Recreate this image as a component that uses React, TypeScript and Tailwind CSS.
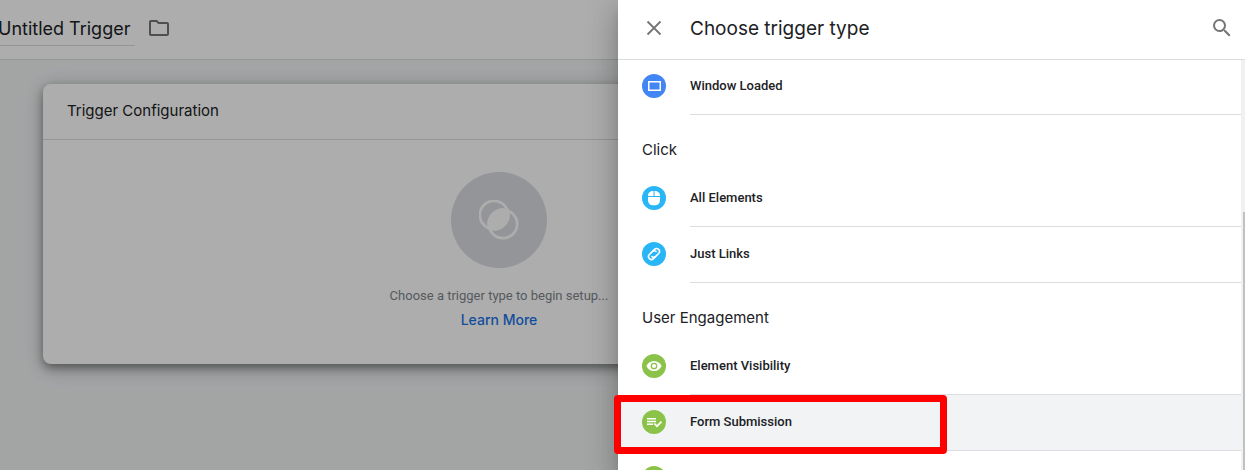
import React from 'react';
import { MdOutlineFolder, MdSearch } from 'react-icons/md';

type IconName = 'window' | 'mouse' | 'link' | 'eye' | 'form' | 'scroll';

interface TriggerType {
  label: string;
  icon: IconName;
  selected?: boolean;
}

interface TriggerGroup {
  title?: string;
  items: TriggerType[];
}

const groups: TriggerGroup[] = [
  { items: [{ label: 'Window Loaded', icon: 'window' }] },
  {
    title: 'Click',
    items: [
      { label: 'All Elements', icon: 'mouse' },
      { label: 'Just Links', icon: 'link' },
    ],
  },
  {
    title: 'User Engagement',
    items: [
      { label: 'Element Visibility', icon: 'eye' },
      { label: 'Form Submission', icon: 'form', selected: true },
      { label: '', icon: 'scroll' },
    ],
  },
];

const iconColors: Record<IconName, string> = {
  window: 'text-[#4285f4]',
  mouse: 'text-[#29b6f6]',
  link: 'text-[#29b6f6]',
  eye: 'text-[#8bc34a]',
  form: 'text-[#8bc34a]',
  scroll: 'text-[#8bc34a]',
};

const TriggerIcon: React.FC<{ name: IconName }> = ({ name }) => (
  <svg viewBox="0 0 24 24" className={`mb-0.5 size-6 shrink-0 ${iconColors[name]}`} aria-hidden="true">
    <circle cx="12" cy="12" r="12" fill="currentColor" />
    {name === 'window' && <path d="M6 7h13v10H6zM7.500 8.500v7h10v-7z" fill="#fff" fillRule="evenodd" />}
    {name === 'mouse' && (
      <>
        <path d="M11.500 5v5H6V9.500C6 6.900 8.200 5 11.500 5zM12.500 5C15.800 5 18 6.900 18 9.500v.5h-5.500z" fill="#fff" />
        <path d="M6 11h12v3.500a4.800 4.800 0 0 1-4.800 4.800h-2.400A4.800 4.800 0 0 1 6 14.500z" fill="#fff" />
      </>
    )}
    {name === 'link' && (
      <g transform="rotate(-45 12 12)" fill="none" stroke="#fff" strokeWidth="1.600" strokeLinecap="round">
        <path d="M11.200 14.900H8.400a2.900 2.900 0 0 1 0-5.800h4a2.900 2.900 0 0 1 2.800 2.500" />
        <path d="M12.800 9.100h2.800a2.900 2.900 0 0 1 0 5.800h-4a2.900 2.900 0 0 1-2.800-2.500" />
      </g>
    )}
    {name === 'eye' && (
      <>
        <path d="M4.400 12C5.600 9 8.500 6.900 12 6.900s6.400 2.100 7.600 5.100c-1.200 3-4.100 5.100-7.600 5.100S5.600 15 4.400 12z" fill="#fff" />
        <circle cx="12" cy="12" r="2.700" fill="#fff" stroke="currentColor" strokeWidth="1.300" />
      </>
    )}
    {name === 'form' && (
      <>
        <path d="M5 8h9v1.400H5zM5 10.800h9v1.400H5zM5 13.600h6V15H5z" fill="#fff" />
        <path d="M12.300 13.500l2.700 2.700 4.500-4.500" fill="none" stroke="#fff" strokeWidth="1.700" />
      </>
    )}
  </svg>
);

const TriggerRow: React.FC<{ item: TriggerType }> = ({ item }) => (
  <li className="relative">
    <button
      type="button"
      className={`flex h-14 w-full items-center gap-6 pl-6 text-left ${item.selected ? 'bg-[#f1f3f4]' : 'bg-white'}`}
    >
      <TriggerIcon name={item.icon} />
      <span className="flex h-full flex-1 items-center border-b border-[#dadce0] pb-0.5 text-[13px] font-medium text-[#202124]">
        {item.label}
      </span>
    </button>
    {item.selected && (
      <div className="pointer-events-none absolute top-0 -left-1 z-10 h-[59px] w-[333px] rounded-[4px] border-[7px] border-[#ff0000]" />
    )}
  </li>
);

const TriggerDrawer: React.FC = () => (
  <aside
    role="dialog"
    aria-label="Choose trigger type"
    className="absolute inset-y-0 right-0 flex w-[627px] max-w-full flex-col bg-white shadow-[0_8px_10px_-5px_rgba(0,0,0,0.2),0_16px_24px_2px_rgba(0,0,0,0.14),0_6px_30px_5px_rgba(0,0,0,0.12)]"
  >
    <header className="relative z-10 flex h-[60px] shrink-0 items-center border-b border-[#dadce0] bg-white pr-[11px] pb-1 pl-6">
      <button type="button" aria-label="Close" className="mr-6 size-6 text-[#757575]">
        <svg viewBox="0 0 24 24" className="size-6" fill="none" stroke="currentColor" strokeWidth="1.800">
          <path d="M5.500 5.500l13 13M18.500 5.500l-13 13" />
        </svg>
      </button>
      <h2 className="flex-1 pt-1 font-[Inter,sans-serif] text-[19px] text-[#202124]">Choose trigger type</h2>
      <button type="button" aria-label="Search" className="text-[#757575]">
        <MdSearch className="size-6" />
      </button>
    </header>
    <div className="-mt-px flex min-h-0 flex-1">
      <div className="flex-1">
        {groups.map((group, index) => (
          <section key={index}>
            {group.title && (
              <h3 className="flex h-14 items-center px-6 pt-3.5 font-[Inter,sans-serif] text-[15px] text-[#202124]">
                {group.title}
              </h3>
            )}
            <ul>
              {group.items.map(item => (
                <TriggerRow key={item.icon} item={item} />
              ))}
            </ul>
          </section>
        ))}
      </div>
      <div className="flex w-1 flex-col items-end bg-[#f1f1f1] pt-[153px]">
        <div className="w-0.5 flex-1 bg-[#c1c1c1]" />
      </div>
    </div>
  </aside>
);

const TriggerEditor: React.FC = () => (
  <div className="h-full bg-[#f1f3f4]">
    <header className="flex h-[60px] items-start border-b border-[#dadce0] bg-white">
      <input
        aria-label="Trigger name"
        defaultValue="Untitled Trigger"
        className="mt-3 -ml-0.5 h-[34px] w-[137px] border-b border-[#dadce0] font-[Inter,sans-serif] text-lg text-[#202124] outline-none"
      />
      <button type="button" aria-label="Choose folder" className="mt-4 ml-3 text-[#757575]">
        <MdOutlineFolder className="size-6" />
      </button>
    </header>
    <main className="pt-6 pr-[290px] pl-[43px]">
      <section className="rounded-lg bg-white shadow-[0_4px_8px_rgba(0,0,0,0.35),0_4px_20px_rgba(0,0,0,0.25)]">
        <h2 className="flex h-14 items-center border-b border-[#dadce0] px-6 font-[Inter,sans-serif] text-[15px] text-[#202124]">
          Trigger Configuration
        </h2>
        <div className="flex flex-col items-center pt-8 pb-[34px]">
          <div className="flex size-24 items-center justify-center rounded-full bg-[#dadce0]">
            <svg viewBox="0 0 40 40" className="size-10" aria-hidden="true">
              <g fill="none" stroke="#fff" strokeWidth="2.700">
                <circle cx="15" cy="15" r="14.200" />
                <circle cx="24" cy="24" r="14.200" />
              </g>
              <path d="M29.500 9.500A15.500 15.500 0 0 1 9.500 29.500 15.500 15.500 0 0 1 29.500 9.500z" fill="#fff" />
            </svg>
          </div>
          <p className="mt-[18px] text-[13px]/5 text-[#80868b]">Choose a trigger type to begin setup...</p>
          <a href="#learn-more" className="mt-1 font-[Inter,sans-serif] text-sm font-medium text-[#1a73e8]">
            Learn More
          </a>
        </div>
      </section>
    </main>
  </div>
);

export default function App() {
  return (
    <div className="relative h-screen overflow-hidden font-[Roboto,sans-serif]">
      <TriggerEditor />
      <div className="absolute inset-0 bg-black/32" />
      <TriggerDrawer />
    </div>
  );
}
